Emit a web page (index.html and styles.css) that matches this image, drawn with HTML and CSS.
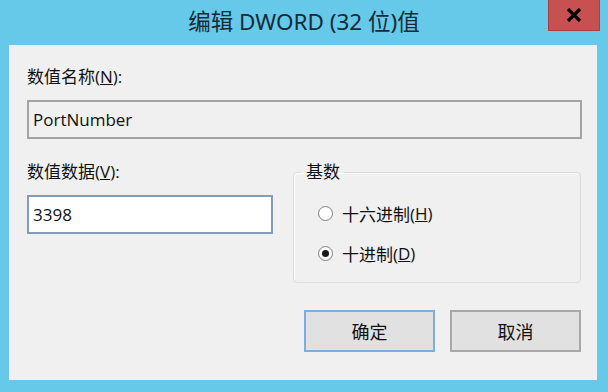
FILE: index.html
```html
<!DOCTYPE html>
<html lang="zh-CN">

<head>
    <meta charset="UTF-8">
    <title>编辑 DWORD (32 位)值</title>
    <link rel="stylesheet" href="styles.css">
</head>

<body>
    <div class="titlebar">
        <div></div>
        <div class="title">编辑 DWORD (32 位)值</div>
        <button class="close">
            <svg width="16" height="14" viewBox="0 0 16 14">
                <path d="M2 1 L14 13 M14 1 L2 13" stroke="#000" stroke-width="3.2" />
            </svg>
        </button>
    </div>

    <div class="client">
        <div class="label first">数值名称(<u>N</u>):</div>
        <div class="field readonly">PortNumber</div>

        <div class="row">
            <div class="col-left">
                <div class="label">数值数据(<u>V</u>):</div>
                <div class="field edit">3398</div>
            </div>
            <fieldset class="group">
                <legend>基数</legend>
                <label class="radio"><span class="dot"></span>十六进制(<u>H</u>)</label>
                <label class="radio"><span class="dot checked"></span>十进制(<u>D</u>)</label>
            </fieldset>
        </div>

        <div class="buttons">
            <button class="btn default">确定</button>
            <button class="btn">取消</button>
        </div>
    </div>
</body>

</html>
```

FILE: styles.css
```css
body {
    margin: 0;
    width: 608px;
    height: 392px;
    background-color: #66c9ea;
    font-family: 'Open Sans', 'Noto Sans CJK SC', sans-serif;
    color: #111;
    overflow: hidden;
}

.titlebar {
    display: grid;
    grid-template-columns: 1fr auto 1fr;
    height: 45px;
}

.title {
    font-family: 'Noto Sans', 'Noto Sans CJK SC', sans-serif;
    font-size: 22.5px;
    color: #172a35;
    line-height: 44px;
}

.close {
    justify-self: end;
    align-self: start;
    margin-right: 8px;
    width: 52px;
    height: 31px;
    padding: 0;
    background-color: #c75050;
    border: 1px solid #a84040;
    border-top: none;
    display: flex;
    justify-content: center;
    align-items: center;
}

.client {
    margin: 0 11px 0 9px;
    height: 335px;
    background-color: #f0f0f0;
    padding: 0 15px 0 18px;
    box-sizing: border-box;
    font-size: 17px;
}

.label {
    height: 20px;
    line-height: 20px;
    margin-bottom: 13px;
}

.label.first {
    padding-top: 22px;
    margin-bottom: 13px;
}

.field {
    height: 39px;
    line-height: 35px;
    box-sizing: border-box;
    padding: 0 0 2px 4px;
    font-size: 17px;
}

.readonly {
    border: 2px solid #a3a3a3;
    background-color: #f0f0f0;
}

.edit {
    border: 2px solid #7f9db9;
    background-color: #fff;
    width: 246px;
}

.row {
    display: flex;
    margin-top: 23px;
}

.col-left {
    width: 266px;
}

.group {
    margin: 0;
    padding: 21px 0 0 8px;
    width: 288px;
    height: 121px;
    box-sizing: border-box;
    border: 1px solid #dcdcdc;
    border-radius: 4px;
    box-shadow: inset 1px 1px 0 #fff;
}

.group legend {
    padding: 0 4px;
    margin-left: 0;
    line-height: 20px;
}

.radio {
    display: flex;
    align-items: center;
    height: 20px;
    margin: 0 0 20px 16px;
}

.dot {
    width: 15px;
    height: 15px;
    box-sizing: border-box;
    border: 1px solid #808080;
    border-radius: 50%;
    background: radial-gradient(circle, #fff 55%, #e8e8e8 100%);
    margin-right: 9px;
    display: flex;
    justify-content: center;
    align-items: center;
}

.dot.checked::after {
    content: "";
    width: 7px;
    height: 7px;
    border-radius: 50%;
    background-color: #1a1a1a;
}

.buttons {
    display: flex;
    justify-content: flex-end;
    gap: 15px;
    margin-top: 27px;
    padding-right: 1px;
}

.btn {
    width: 131px;
    height: 42px;
    background-color: #e1e1e1;
    border: 2px solid #a8a8a8;
    font-family: 'Noto Sans CJK SC', sans-serif;
    font-size: 18px;
    color: #111;
    padding: 0;
}

.btn.default {
    border-color: #7eaee0;
}
```
